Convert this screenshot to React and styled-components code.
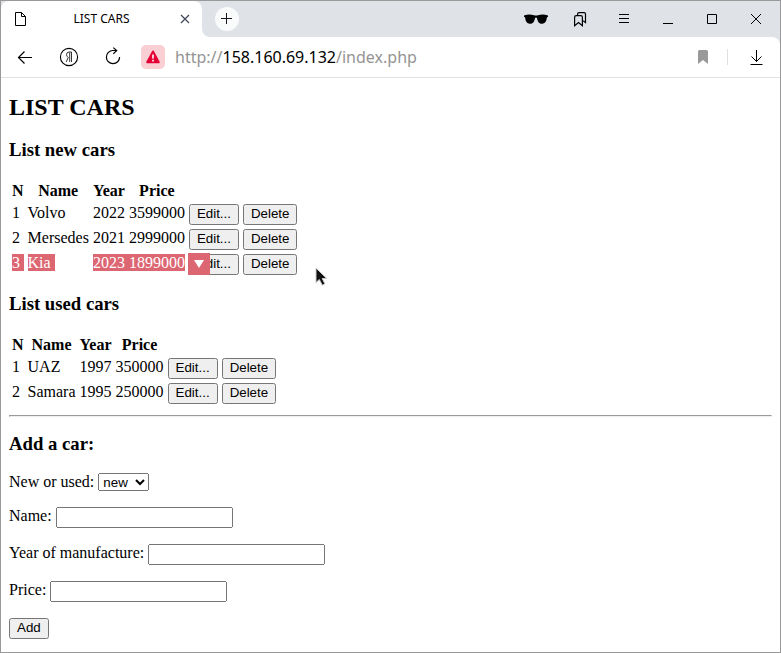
import React from "react";
import styled, { createGlobalStyle, css } from "styled-components";

const GlobalStyle = createGlobalStyle`
  *, *::before, *::after { box-sizing: border-box; }
  body {
    margin: 0;
    color: #000;
    background: #fff;
    font-family: "Liberation Serif", serif;
    font-size: 16px;
  }
`;

const Window = styled.div`
  position: relative;
  display: flex;
  flex-direction: column;
  min-height: 100vh;
  border: 1px solid #999;
  background: #fff;
`;

const TabBar = styled.header`
  display: flex;
  height: 36px;
  background: #fff;
  font-family: "Noto Sans", sans-serif;
`;

const TabBacking = styled.div`
  display: flex;
  background: linear-gradient(#dfe2e7 50%, #fff 50%);
`;

const Tab = styled.div`
  display: flex;
  align-items: center;
  width: 201px;
  padding: 0 8px 0 10px;
  border-radius: 8px 8px 0 0;
  background: #fff;
`;

const TabTitle = styled.span`
  flex: 1;
  padding-right: 2px;
  font-size: 12px;
  line-height: 16px;
  text-align: center;
`;

const Strip = styled.div`
  display: flex;
  flex: 1;
  align-items: center;
  padding: 0 2px 0 13px;
  border-radius: 0 0 0 8px;
  background: #dfe2e7;
`;

const Spacer = styled.div`
  flex: 1;
`;

const IconButton = styled.button`
  display: flex;
  flex: none;
  align-items: center;
  justify-content: center;
  width: ${({ $width = 44 }) => $width}px;
  height: 24px;
  padding: 0;
  border: 0;
  background: transparent;
  color: #000;
`;

const NewTabButton = styled(IconButton)`
  border-radius: 50%;
  background: #f9fafa;
`;

const WarningButton = styled(IconButton)`
  margin: 0 10px 0 6px;
  border-radius: 5px;
  background: #facfd4;
`;

const ToolbarBacking = styled.div`
  background: linear-gradient(to right, #fff 50%, #dfe2e7 50%);
`;

const Toolbar = styled.nav`
  display: flex;
  align-items: center;
  height: 41px;
  padding: 0 2px;
  border-bottom: 1px solid #e2e2e2;
  border-radius: 0 8px 0 0;
  background: #fff;
  font-family: "Noto Sans", sans-serif;
`;

const Address = styled.div`
  flex: 1;
  color: #949494;
  font-size: 16px;
  line-height: 24px;
  white-space: nowrap;
`;

const Host = styled.span`
  color: #000;
`;

const Divider = styled.div`
  width: 1px;
  height: 16px;
  margin-right: 6px;
  background: #e0e0e0;
`;

const Page = styled.main`
  display: flow-root;
  padding: 0 8px;
`;

const Title = styled.h2`
  margin: 16px 0 18px;
  font-size: 24px;
  line-height: 27px;
`;

const Heading = styled.h3`
  margin: 15px 0 18px;
  line-height: 22px;
`;

const CarTable = styled.table`
  border-spacing: 2px;

  th, td { padding: 1px; }
  td { vertical-align: top; }
`;

const ActionCell = styled.td`
  position: relative;
`;

const Mark = styled.span`
  ${({ $on, $tail }) =>
    $on &&
    css`
      color: #fff;
      background: #dd6673;
      box-shadow: ${$tail ? "4px 0 0 #dd6673" : "none"};
    `}
`;

const FormButton = styled.button`
  display: block;
  padding: 0 6px 2px;
  font-family: "Liberation Sans", sans-serif;
`;

const SelectionMenu = styled.button`
  position: absolute;
  top: 0;
  left: 0;
  display: flex;
  align-items: center;
  justify-content: center;
  width: 22px;
  height: 22px;
  padding: 0;
  border: 0;
  background: #dd6673;
`;

const Rule = styled.hr`
  margin: 8px 0 16px;
`;

const Field = styled.p`
  margin: 0 0 16px;
`;

const Select = styled.select`
  height: 18px;
  font-family: "Liberation Sans", sans-serif;
`;

const TextInput = styled.input`
  width: 177px;
  padding: 0 2px 2px;
  font-family: "Liberation Sans", sans-serif;
`;

const Pointer = styled.svg`
  position: absolute;
  top: 265px;
  left: 313px;
`;

const Icon = ({ w = 24, h = 24, children, ...rest }) => (
  <svg width={w} height={h} viewBox={`0 0 ${w} ${h}`} fill="none" stroke="#000" strokeWidth="1.2" aria-hidden="true" {...rest}>
    {children}
  </svg>
);

const newCars = [
  ["1", "Volvo", "2022", "3599000"],
  ["2", "Mersedes", "2021", "2999000"],
  ["3", "Kia", "2023", "1899000"],
];

const usedCars = [
  ["1", "UAZ", "1997", "350000"],
  ["2", "Samara", "1995", "250000"],
];

function Cars({ cars, selected }) {
  return (
    <CarTable>
      <thead>
        <tr>
          <th>N</th>
          <th>Name</th>
          <th>Year</th>
          <th>Price</th>
        </tr>
      </thead>
      <tbody>
        {cars.map((car) => {
          const on = car[0] === selected;
          return (
            <tr key={car[0]}>
              {car.map((value, i) => (
                <td key={i}>
                  <Mark $on={on} $tail={i < 3}>{value}</Mark>
                </td>
              ))}
              <ActionCell>
                <FormButton type="button">Edit...</FormButton>
                {on && (
                  <SelectionMenu type="button" aria-label="Selection actions">
                    <Icon w={10} h={8} stroke="none" fill="#fff">
                      <path d="M0 0h10L5 8z" />
                    </Icon>
                  </SelectionMenu>
                )}
              </ActionCell>
              <td>
                <FormButton type="button">Delete</FormButton>
              </td>
            </tr>
          );
        })}
      </tbody>
    </CarTable>
  );
}

function BrowserTabs() {
  return (
    <TabBar>
      <TabBacking>
        <Tab>
          <Icon w={18} h={18} strokeWidth="1">
            <path d="M4.500 2.500h6l4 4v9h-10zM10.500 2.500v4h4" />
          </Icon>
          <TabTitle>LIST CARS</TabTitle>
          <IconButton type="button" $width={18} aria-label="Close tab">
            <Icon w={18} h={18} stroke="#3f4657" strokeWidth="1.2">
              <path d="M5 5l8 8M13 5l-8 8" />
            </Icon>
          </IconButton>
        </Tab>
      </TabBacking>
      <Strip>
        <NewTabButton type="button" $width={24} aria-label="New tab">
          <Icon stroke="#15171d" strokeWidth="1">
            <path d="M6 11.500h11M11.500 6v11" />
          </Icon>
        </NewTabButton>
        <Spacer />
        <IconButton type="button" aria-label="Incognito">
          <Icon w={26} h={24} stroke="none" fill="#000">
            <path d="M1 8.500Q6 6.800 11 8.200q2 .8 4 0 5-1.400 10 .3v1.300l-1.200.8c-.2 4-2 6.200-4.600 6.200-3 0-4.600-1.800-5.200-5.800q-1-.8-2 0c-.6 4-2.200 5.800-5.200 5.800-2.600 0-4.400-2.200-4.600-6.200L1 9.800z" />
          </Icon>
        </IconButton>
        <IconButton type="button" aria-label="Collections">
          <Icon>
            <path d="M6.600 10.200q0-1.600 1.600-1.600h4.600q1.600 0 1.600 1.600v8.600l-3.900-3.300-3.900 3.300z" />
            <path d="M9.600 8.200V7q0-1.400 1.400-1.400h5q1.500 0 1.500 1.500v8.500l-2.300-1.800" />
          </Icon>
        </IconButton>
        <IconButton type="button" aria-label="Menu">
          <Icon strokeWidth="1"><path d="M7 7.500h10M7 11.500h10M7 15.500h10" /></Icon>
        </IconButton>
        <IconButton type="button" aria-label="Minimize">
          <Icon strokeWidth="1"><path d="M7 16.500h10" /></Icon>
        </IconButton>
        <IconButton type="button" aria-label="Maximize">
          <Icon strokeWidth="1"><path d="M7.500 7.500h9v9h-9z" /></Icon>
        </IconButton>
        <IconButton type="button" aria-label="Close window">
          <Icon strokeWidth="1"><path d="M7 7l10 10M17 7L7 17" /></Icon>
        </IconButton>
      </Strip>
    </TabBar>
  );
}

function AddressBar() {
  return (
    <ToolbarBacking>
      <Toolbar>
        <IconButton type="button" aria-label="Back">
          <Icon><path d="M19 12.500H5.500M11.500 6.500l-6 6 6 6" /></Icon>
        </IconButton>
        <IconButton type="button" aria-label="Yandex">
          <Icon strokeWidth="1.100">
            <circle cx="12" cy="12" r="8.600" />
            <path d="M14.500 17V7h-2.300Q9.500 7 9.500 9.600q0 1.600 1.700 2.900L9.200 17M12.700 7.500V17" strokeWidth=".8" />
          </Icon>
        </IconButton>
        <IconButton type="button" aria-label="Reload">
          <Icon>
            <path d="M18.600 12a6.600 6.600 0 1 1-6.600-6.500h3.700M12.300 2.600l3.400 2.900-3.400 3.400" />
          </Icon>
        </IconButton>
        <WarningButton type="button" $width={24} aria-label="Not secure">
          <Icon stroke="none">
            <path d="M12 6.500l5.800 10.800H6.200z" fill="#e50036" stroke="#e50036" strokeWidth="2" strokeLinejoin="round" />
            <path d="M12 9.500v4M12 14.800v1.800" stroke="#fff" strokeWidth="1.600" />
          </Icon>
        </WarningButton>
        <Address>
          http://<Host>158.160.69.132</Host>/index.php
        </Address>
        <IconButton type="button" $width={48} aria-label="Bookmark">
          <Icon stroke="none" fill="#999">
            <path d="M7 6.500Q7 5 8.500 5h7Q17 5 17 6.500V19l-5-4-5 4z" />
          </Icon>
        </IconButton>
        <Divider />
        <IconButton type="button" aria-label="Downloads">
          <Icon strokeWidth="1"><path d="M12.500 5v11.500M7.500 11.500l5 5 5-5M6.500 19.500h12" /></Icon>
        </IconButton>
      </Toolbar>
    </ToolbarBacking>
  );
}

export default function App() {
  return (
    <>
      <GlobalStyle />
      <Window>
        <BrowserTabs />
        <AddressBar />
        <Page>
          <Title>LIST CARS</Title>
          <Heading>List new cars</Heading>
          <Cars cars={newCars} selected="3" />
          <Heading>List used cars</Heading>
          <Cars cars={usedCars} />
          <Rule />
          <Heading>Add a car:</Heading>
          <form onSubmit={(e) => e.preventDefault()}>
            <Field>
              <label htmlFor="kind">New or used:</label>{" "}
              <Select id="kind" defaultValue="new">
                <option>new</option>
                <option>used</option>
              </Select>
            </Field>
            <Field>
              <label htmlFor="name">Name:</label> <TextInput id="name" type="text" />
            </Field>
            <Field>
              <label htmlFor="year">Year of manufacture:</label> <TextInput id="year" type="text" />
            </Field>
            <Field>
              <label htmlFor="price">Price:</label> <TextInput id="price" type="text" />
            </Field>
            <FormButton type="submit">Add</FormButton>
          </form>
        </Page>
        <Pointer width="16" height="22" viewBox="0 0 16 22" aria-hidden="true">
          <path d="M2 2v14.500l3.300-3 3 5.700 2.600-1.400-2.700-5.300h4.500z" fill="#111" stroke="#ccc" strokeWidth="1" />
        </Pointer>
      </Window>
    </>
  );
}
